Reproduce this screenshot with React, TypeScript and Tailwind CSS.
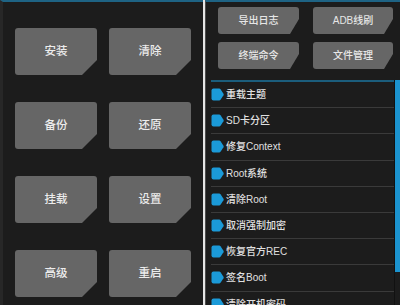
import React from 'react';

const font = { fontFamily: '"Liberation Sans", "Noto Sans CJK SC", sans-serif' };

const mainButtons = ['安装', '清除', '备份', '还原', '挂载', '设置', '高级', '重启'];
const toolButtons = ['导出日志', 'ADB线刷', '终端命令', '文件管理'];
const menuItems = [
  '重载主题',
  'SD卡分区',
  '修复Context',
  'Root系统',
  '清除Root',
  '取消强制加密',
  '恢复官方REC',
  '签名Boot',
  '清除开机密码',
];

function TagIcon() {
  return (
    <svg width="13" height="13" viewBox="0 0 13 13" className="shrink-0">
      <path d="M2.5 0.5 H8.2 Q9 0.5 9.5 1.2 L12.5 5.7 Q13 6.5 12.5 7.3 L9.5 11.8 Q9 12.5 8.2 12.5 H2.5 Q0.5 12.5 0.5 10.5 V2.5 Q0.5 0.5 2.5 0.5 Z" fill="#1b9ad8" />
    </svg>
  );
}

export default function App() {
  return (
    <div className="flex w-[400px] h-[305px] overflow-hidden bg-[#1c1c1c]" style={font}>
      {/* left screen */}
      <div className="w-[203px] h-full border-t-2 border-[#1e6384] border-l-[3px] border-l-[#272727] bg-[#1c1c1c]">
        <div className="grid grid-cols-[82px_82px] gap-x-[12px] gap-y-[27px] pl-[12px] pt-[26px]">
          {mainButtons.map((label) => (
            <div
              key={label}
              className="h-[47px] flex items-center justify-center rounded-[3px] bg-[#666666] text-[11.5px] font-medium text-[#ececec] [clip-path:polygon(0_0,100%_0,100%_calc(100%_-_15px),calc(100%_-_15px)_100%,0_100%)]"
            >
              {label}
            </div>
          ))}
        </div>
      </div>

      {/* divider */}
      <div className="w-[2px] h-full bg-[#e6e6e6]" />

      {/* right screen */}
      <div className="flex-1 h-full flex flex-col border-t-2 border-[#1e6384] border-l border-l-[#4d4d4d] pl-[5px]">
        <div className="grid grid-cols-[81px_80px] gap-x-[14px] gap-y-[8px] pl-[7px] pt-[5px]">
          {toolButtons.map((label) => (
            <div
              key={label}
              className="h-[27px] flex items-center justify-center rounded-[3px] bg-[#666666] text-[10px] font-medium text-[#e6e6e6] [clip-path:polygon(0_0,100%_0,100%_calc(100%_-_15px),calc(100%_-_9px)_100%,0_100%)]"
            >
              {label}
            </div>
          ))}
        </div>

        <div className="mt-[11px] flex flex-1 min-h-0">
          <div className="flex-1 border-t-2 border-[#1b5d7c] overflow-hidden">
            {menuItems.map((item) => (
              <div
                key={item}
                className="h-[26.2px] flex items-center gap-[2px] border-b border-[#3a3a3a] text-[10px] font-medium text-[#e0e0e0]"
              >
                <TagIcon />
                <span>{item}</span>
              </div>
            ))}
          </div>
          <div className="w-px bg-[#111111]" />
          <div className="w-[5px] h-[192px] bg-[#1b93cf]" />
        </div>
      </div>
    </div>
  );
}
